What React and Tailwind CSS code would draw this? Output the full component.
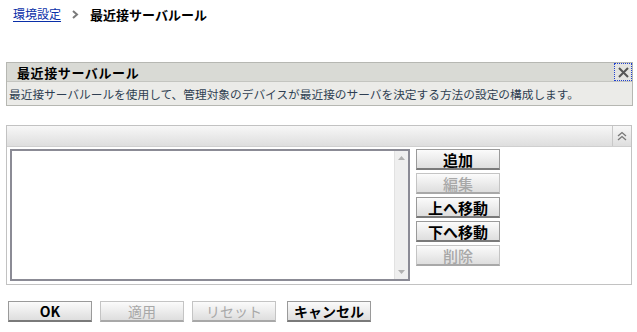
import React from 'react';

const font = { fontFamily: '"Noto Sans CJK JP", "Liberation Sans", sans-serif' };

const SideButton = ({ label, disabled }) => (
    <button
        className={`w-[84px] h-[21px] flex items-center justify-center text-[15px] leading-none border border-b-2 bg-gradient-to-b from-[#fbfbfb] to-[#dedede] ${disabled ? 'text-[#a8a8a8] border-[#c4c4c4] border-b-[#a8a8a8] font-medium' : 'text-black border-[#9a9a9a] border-b-[#7a7a7a] font-bold'}`}
    >
        {label}
    </button>
);

const FooterButton = ({ label, disabled }) => (
    <button
        className={`w-[84px] h-[21px] flex items-center justify-center text-[14px] leading-none border border-b-2 bg-gradient-to-b from-[#fbfbfb] to-[#dedede] ${disabled ? 'text-[#a8a8a8] border-[#c4c4c4] border-b-[#a8a8a8] font-normal' : 'text-black border-[#9a9a9a] border-b-[#7a7a7a] font-bold'}`}
    >
        {label}
    </button>
);

const App = () => {
    return (
        <div className="w-[637px] h-[332px] bg-white overflow-hidden" style={font}>
            {/* breadcrumb */}
            <div className="flex items-center h-[16px] mt-[6px] ml-[13px] text-[12px] leading-none">
                <a className="text-[#0a2fa8] underline underline-offset-2">環境設定</a>
                <svg className="ml-[11px] mr-[11px]" width="7" height="9" viewBox="0 0 7 9">
                    <path d="M1 1 L5 4.5 L1 8" fill="none" stroke="#7a7a7a" strokeWidth="2" />
                </svg>
                <span className="font-bold text-black text-[13px]">最近接サーバルール</span>
            </div>

            {/* info panel */}
            <div className="ml-[6px] mt-[40px] w-[627px] border border-[#b6b7b2]">
                <div className="h-[18px] bg-[#d9dad5] flex items-center justify-between">
                    <span className="ml-[10px] text-[13px] font-bold leading-none text-black tracking-[0.6px]">最近接サーバルール</span>
                    <div className="w-[18px] h-[18px] border border-dotted border-[#1f3fd0] flex items-center justify-center bg-[#e4e4e0]">
                        <svg width="11" height="11" viewBox="0 0 11 11">
                            <path d="M1 1 L10 10 M10 1 L1 10" stroke="#555" strokeWidth="2" />
                        </svg>
                    </div>
                </div>
                <div className="h-[24px] bg-[#ebebe8] border-t border-[#c4c5c0] flex items-center">
                    <span className="ml-[2px] text-[11.7px] leading-none text-[#2f3f52] whitespace-nowrap">
                        最近接サーバルールを使用して、管理対象のデバイスが最近接のサーバを決定する方法の設定の構成します。
                    </span>
                </div>
            </div>

            {/* list panel */}
            <div className="ml-[6px] mt-[19px] w-[626px] border border-[#c2c2c2]">
                <div className="h-[21px] flex justify-end bg-gradient-to-b from-[#f7f7f7] to-[#dedede] border-b border-[#cfcfcf]">
                    <div className="w-[19px] border-l border-[#c8c8c8] flex items-center justify-center">
                        <svg width="10" height="10" viewBox="0 0 10 10">
                            <path d="M1 5 L5 1.5 L9 5 M1 9 L5 5.5 L9 9" fill="none" stroke="#777" strokeWidth="1.3" />
                        </svg>
                    </div>
                </div>
                <div className="flex h-[137px] pt-[2px] pl-[3px]">
                    <div className="w-[400px] h-[132px] border-2 border-[#8b8b95] flex justify-end">
                        <div className="w-[14px] h-full bg-[#efefef] border-l border-[#e2e2e2] flex flex-col items-center justify-between py-[5px]">
                            <svg width="7" height="4" viewBox="0 0 7 4"><path d="M0 4 L3.5 0 L7 4Z" fill="#b0b0b0" /></svg>
                            <svg width="7" height="4" viewBox="0 0 7 4"><path d="M0 0 L3.5 4 L7 0Z" fill="#b0b0b0" /></svg>
                        </div>
                    </div>
                    <div className="ml-[6px] flex flex-col gap-[3px]">
                        <SideButton label="追加" />
                        <SideButton label="編集" disabled />
                        <SideButton label="上へ移動" />
                        <SideButton label="下へ移動" />
                        <SideButton label="削除" disabled />
                    </div>
                </div>
            </div>

            {/* footer */}
            <div className="flex mt-[16px] ml-[8px] gap-[8px]">
                <FooterButton label="OK" />
                <FooterButton label="適用" disabled />
                <FooterButton label="リセット" disabled />
                <div className="ml-[3px]">
                    <FooterButton label="キャンセル" />
                </div>
            </div>
        </div>
    );
};

export default App;
